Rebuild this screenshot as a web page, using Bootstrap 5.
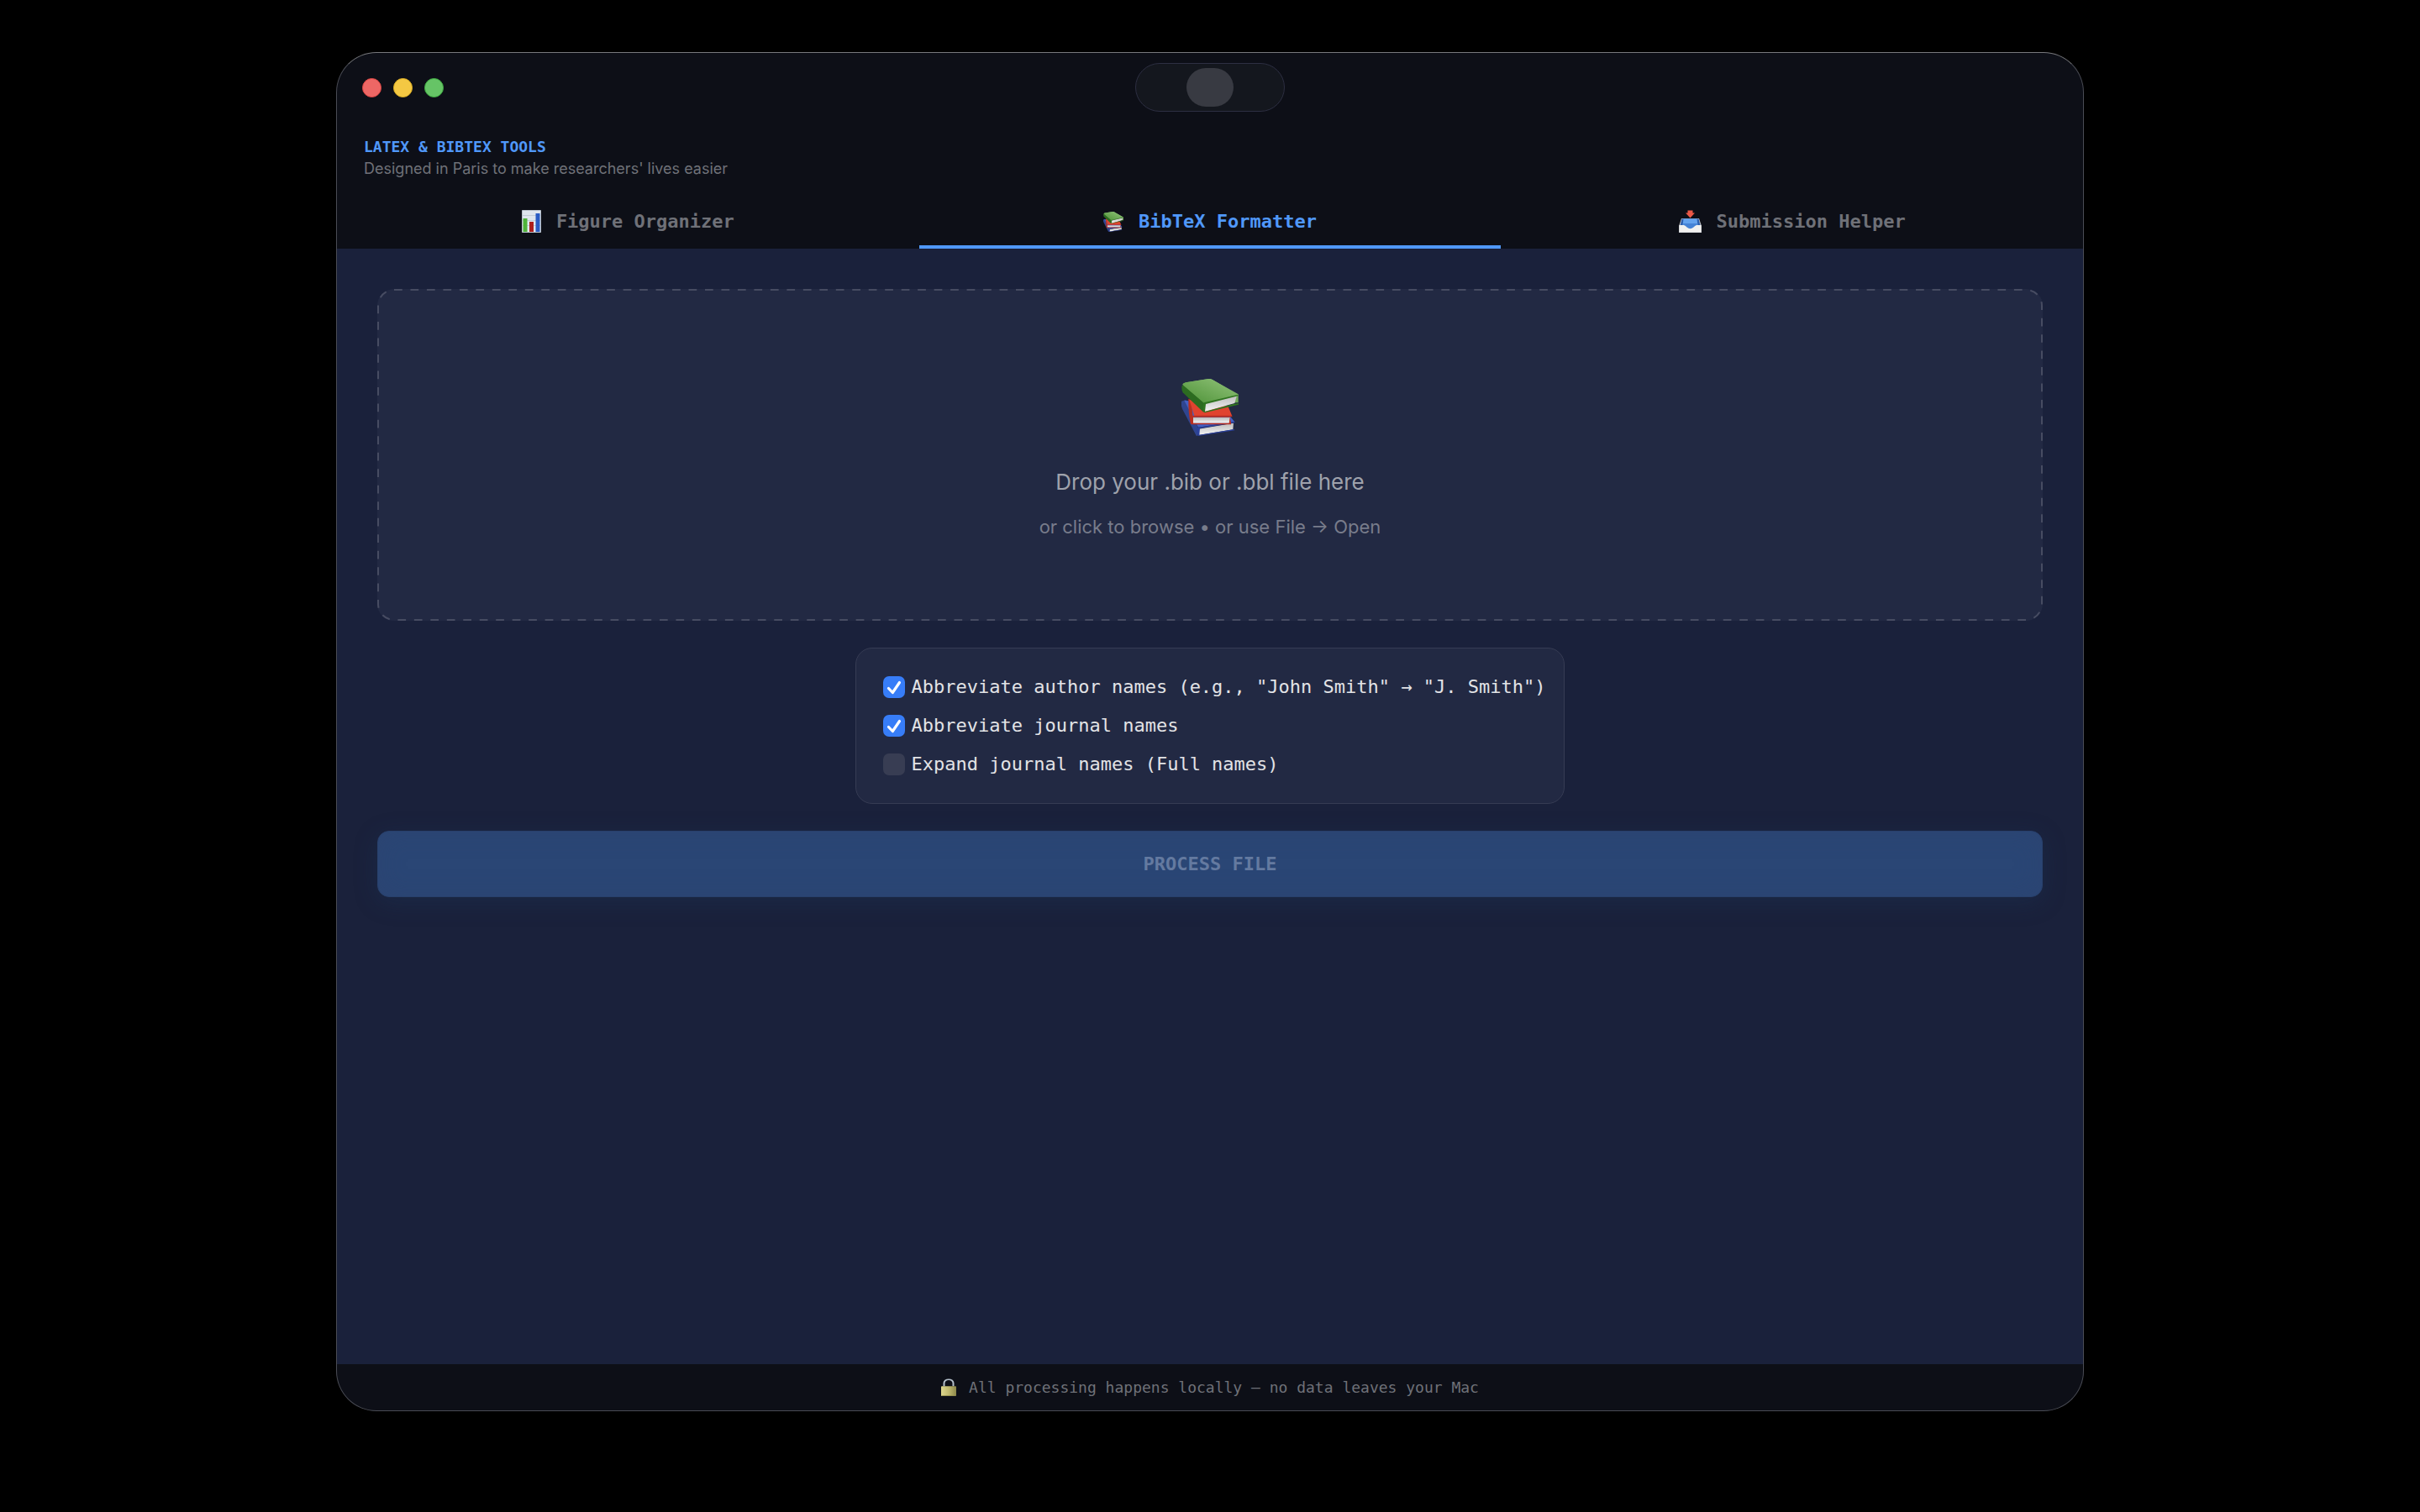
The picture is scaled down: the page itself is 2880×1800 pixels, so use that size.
<!DOCTYPE html>
<html lang="en">
<head>
<meta charset="utf-8">
<meta name="viewport" content="width=device-width, initial-scale=1">
<title>LaTeX &amp; BibTeX Tools</title>
<link href="https://cdn.jsdelivr.net/npm/bootstrap@5.3.0/dist/css/bootstrap.min.css" rel="stylesheet">
<style>
  :root { --ink: #0d0f17; --panel: #1a213b; --raised: #222943; --accent: #5098fa; --muted: #6f7178; --mono: "DejaVu Sans Mono", monospace; --ui: Inter, "Liberation Sans", sans-serif; }
  body { background: #000; font-family: var(--ui); padding: 62px 48px 120px; }
  .app-window { max-width: 2080px; background: var(--ink); border: 1px solid #4a4c55; border-top-color: #77787c; border-radius: 48px; }
  .title-bar { height: 82px; padding: 0 30px; }
  .light { width: 23px; height: 23px; border: 1px solid; border-radius: 50%; padding: 0; }
  .light-red { background: #ed6765; border-color: #dd4644; }
  .light-yellow { background: #f4c843; border-color: #dcae24; }
  .light-green { background: #66c466; border-color: #3fae42; }
  .light-group { gap: 14px; }
  .pill { width: 178px; height: 58px; border: 1px solid #2d2f42; border-radius: 29px; background: #14171e; padding: 0; }
  .pill-knob { width: 56px; height: 46px; border-radius: 23px; background: #383a42; }
  .brand { padding: 18px 32px 20px; }
  .brand h1 { font: 700 18px/24px var(--mono); color: var(--accent); margin: 0; }
  .brand p { font-size: 18px; line-height: 28px; color: var(--muted); margin: 0; }
  .tool-tabs .nav-link { height: 61px; padding: 0; gap: 18px; border-radius: 0; border-bottom: 4px solid transparent; font: 700 22px/30px var(--mono); color: var(--muted); }
  .tool-tabs .nav-link.active { color: var(--accent); border-bottom-color: var(--accent); }
  .stage { background: var(--panel); padding: 48px; gap: 32px; }
  .drop-zone { height: 395px; padding-top: 107px; border-radius: 20px; background: var(--raised); cursor: pointer; }
  .drop-zone .outline { inset: 1px; width: calc(100% - 2px); height: calc(100% - 2px); overflow: visible; }
  .drop-title { font-size: 26px; line-height: 36px; color: #9fa2ac; margin-top: 37px; }
  .drop-hint { font-size: 22px; line-height: 30px; color: #787c8b; margin-top: 20px; }
  .options { border: 1px solid #363c54; border-radius: 20px; background: var(--raised); padding: 32px 22px 32px 32px; gap: 18px; }
  .options .form-check { min-height: 28px; margin: 0; padding: 0; gap: 8px; }
  .options .form-check-input { float: none; width: 26px; height: 26px; margin: 0; border: 0; border-radius: 7px; background-color: #383d53; }
  .options .form-check-input:checked { background-color: #377df8; background-size: 26px; background-image: url("data:image/svg+xml,%3csvg xmlns='http://www.w3.org/2000/svg' viewBox='0 0 26 26'%3e%3cpath fill='none' stroke='white' stroke-width='3.2' stroke-linecap='round' stroke-linejoin='round' d='M6.5 14.5l4.8 5L19.5 7.5'/%3e%3c/svg%3e"); }
  .options .form-check-label { font: 22px/28px var(--mono); color: #e2e3e6; }
  .process { height: 79px; border-radius: 14px; font: 700 22px/30px var(--mono); }
  .process, .process:disabled { background: #2a4675; border: 1px solid #28406c; color: #647aa0; opacity: 1; box-shadow: 0 6px 28px rgba(30, 62, 100, .28), inset 0 0 30px rgba(50, 65, 110, .35); }
  .foot-bar { height: 55px; gap: 15px; font: 18px/24px var(--mono); color: var(--muted); }
</style>
</head>
<body class="min-vh-100 d-flex flex-column">
<svg class="position-absolute" width="0" height="0" aria-hidden="true">
  <defs>
    <linearGradient id="gTop" x1="0" y1="1" x2="1" y2="0"><stop offset="0" stop-color="#4c9136"/><stop offset="1" stop-color="#93c47b"/></linearGradient>
    <linearGradient id="gPage" x1="0" y1="0" x2="0" y2="1"><stop offset="0" stop-color="#bcbcbc"/><stop offset="1" stop-color="#f4f4f4"/></linearGradient>
    <symbol id="books" viewBox="30 33 204 204">
      <path fill="#2f4590" d="M30 113l16-5 42 96v33l-5-1-48-92q-8-16-5-31z"/>
      <path fill="#4360c4" d="M40 110l50 96 130-19-16-20-90-50z"/>
      <path fill="url(#gPage)" d="M92 212l124-21-2 23-122 20z"/>
      <path fill="#2b409c" d="M86 207l134-22v5l-124 20-2 23 124-20 2 4-130 20q-8-14-4-30z"/>
      <path fill="#b8301f" d="M55 104l10 4 8 84-10 3q-9-40-8-91z"/>
      <path fill="#e0432f" d="M58 108l18 57 135 1-14-34-90-20z"/>
      <path fill="url(#gPage)" d="M70 171h134l-2 20H70z"/>
      <path fill="#b92f22" d="M67 164h144v5h-8l4 22v5H66q-6-16 1-32zm5 6v21h128l3-21z"/>
      <path fill="#2c6b20" d="M32 56q-3 15 3 26l72 69 6 2v-34L48 54z"/>
      <path fill="url(#gTop)" d="M34 53q2-4 12-7l81-13q8-1 15 4l91 51v30l-122 1z"/>
      <path fill="url(#gTop)" d="M34 53q2-4 12-7l81-13q8-1 15 4l91 54-121 29z"/>
      <path fill="url(#gPage)" d="M112 121l116-29-8 28-107 30z"/>
      <path fill="#2f7420" d="M110 118l122-29v5l-115 29-3 27 104-28 16-1v4l-121 29q-12-14-3-36z"/>
    </symbol>
    <symbol id="chart" viewBox="0 0 23 27">
      <path fill="#dfe6ee" stroke="#b9c1cb" d="M.5.5h22v26H.5z"/>
      <path stroke="#c3ccd6" d="M1 6.500h21M1 12.500h21M1 18.500h21"/>
      <path fill="#4fb33a" d="M1.500 10h5v16h-5z"/><path fill="#ad1f1c" d="M9 14h5v12H9z"/><path fill="#2a5cc4" d="M16.500 4h5v22h-5z"/>
    </symbol>
    <symbol id="inbox" viewBox="0 0 27 27">
      <path fill="#b9bcc2" d="M3 10h21l3 9v8H0v-8z"/>
      <path fill="#2b5fae" d="M3.500 10.500h20l2 8h-24z"/>
      <path fill="#64a3ee" d="M5.500 10.500h16l1 8-5 4h-8l-5-4z"/>
      <path fill="#4583d6" d="M5 16h17l-1 4-5 3h-5l-5-3z"/>
      <path fill="#f1f1ef" d="M.500 18H6q2 .5 3.500 2.500 4 3.500 8 0Q19 18.500 21 18h5.500v8.500H.500z"/>
      <path fill="#ea5847" d="M10.500.500h6v3h2.500L13.500 9.500 8 3.500h2.500z"/>
    </symbol>
    <linearGradient id="gBrass"><stop offset="0" stop-color="#ddd78e"/><stop offset=".5" stop-color="#c0b96f"/><stop offset="1" stop-color="#8d884a"/></linearGradient>
    <symbol id="lock" viewBox="0 0 18 27">
      <path fill="none" stroke="#b5c0cb" stroke-width="2" d="M3.500 12V7a5.500 5.500 0 0 1 11 0v5"/>
      <rect width="18" height="15" y="12" rx="1" fill="url(#gBrass)"/>
      <path stroke="#8d884a" d="M1 26.500h16"/>
    </symbol>
  </defs>
</svg>

<main class="app-window w-100 mx-auto flex-grow-1 d-flex flex-column overflow-hidden">
  <header>
    <div class="title-bar row g-0 align-items-center">
      <div class="col d-flex light-group">
        <button type="button" class="light light-red" aria-label="Close"></button>
        <button type="button" class="light light-yellow" aria-label="Minimize"></button>
        <button type="button" class="light light-green" aria-label="Zoom"></button>
      </div>
      <div class="col-auto">
        <button type="button" class="pill d-flex align-items-center justify-content-center" aria-label="Toggle"><span class="pill-knob"></span></button>
      </div>
      <div class="col"></div>
    </div>
    <div class="brand">
      <h1>LATEX &amp; BIBTEX TOOLS</h1>
      <p>Designed in Paris to make researchers' lives easier</p>
    </div>
    <nav class="tool-tabs nav nav-justified" aria-label="Tools">
      <a href="#figures" class="nav-link d-flex align-items-center justify-content-center"><svg width="23" height="27" aria-hidden="true"><use href="#chart"/></svg>Figure Organizer</a>
      <a href="#bibtex" class="nav-link active d-flex align-items-center justify-content-center" aria-current="page"><svg width="24" height="24" aria-hidden="true"><use href="#books"/></svg>BibTeX Formatter</a>
      <a href="#submission" class="nav-link d-flex align-items-center justify-content-center"><svg width="27" height="27" aria-hidden="true"><use href="#inbox"/></svg>Submission Helper</a>
    </nav>
  </header>

  <section class="stage flex-grow-1 d-flex flex-column" id="bibtex">
    <label for="bibFile" class="drop-zone position-relative d-flex flex-column align-items-center">
      <svg class="outline position-absolute" aria-hidden="true"><rect width="100%" height="100%" rx="19" fill="none" stroke="#474c62" stroke-width="2" pathLength="484" stroke-dasharray="1 1"/></svg>
      <svg width="68" height="68" aria-hidden="true"><use href="#books"/></svg>
      <span class="drop-title">Drop your .bib or .bbl file here</span>
      <span class="drop-hint">or click to browse • or use File → Open</span>
      <input type="file" id="bibFile" class="visually-hidden" accept=".bib,.bbl">
    </label>

    <div class="options d-flex flex-column align-self-center">
      <div class="form-check d-flex align-items-center">
        <input class="form-check-input" type="checkbox" id="abbrAuthors" checked>
        <label class="form-check-label" for="abbrAuthors">Abbreviate author names (e.g., "John Smith" → "J. Smith")</label>
      </div>
      <div class="form-check d-flex align-items-center">
        <input class="form-check-input" type="checkbox" id="abbrJournals" checked>
        <label class="form-check-label" for="abbrJournals">Abbreviate journal names</label>
      </div>
      <div class="form-check d-flex align-items-center">
        <input class="form-check-input" type="checkbox" id="expandJournals">
        <label class="form-check-label" for="expandJournals">Expand journal names (Full names)</label>
      </div>
    </div>

    <button type="button" class="btn process w-100" disabled>PROCESS FILE</button>
  </section>

  <footer class="foot-bar d-flex align-items-center justify-content-center">
    <svg width="18" height="21" viewBox="0 0 18 27" preserveAspectRatio="none" aria-hidden="true"><use href="#lock" width="18" height="27"/></svg>
    <span>All processing happens locally — no data leaves your Mac</span>
  </footer>
</main>
<script src="https://cdn.jsdelivr.net/npm/bootstrap@5.3.0/dist/js/bootstrap.bundle.min.js"></script>
</body>
</html>
